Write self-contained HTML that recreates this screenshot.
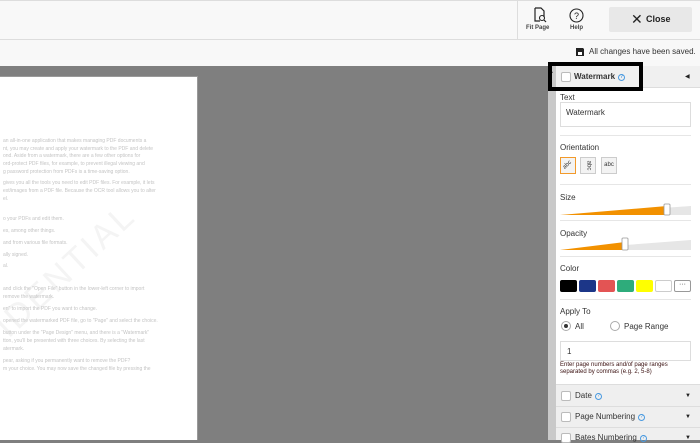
<!DOCTYPE html>
<html><head><meta charset="utf-8"><style>
*{margin:0;padding:0;box-sizing:border-box}
body{width:700px;height:440px;overflow:hidden;font-family:"Liberation Sans",Arial,sans-serif;background:#7f7f7f;position:relative;color:#333}
.a{position:absolute}
.top{left:0;top:0;width:700px;height:40px;background:#f8f8f8;border-top:1px solid #ddd;border-bottom:1px solid #ddd}
.bar2{left:0;top:40px;width:700px;height:26px;background:#f8f8f8}
.page{left:0;top:76px;width:198px;height:364px;background:#fff;border-right:1px solid #999;border-top:1px solid #999;overflow:hidden}
.tx{font-size:5px;color:#c4c4c4;white-space:nowrap;left:3px}
.sb{left:548px;top:66px;width:8px;height:374px;background:#c9c9c9}
.panel{left:556px;top:66px;width:144px;height:374px;background:#fff}
.lbl{font-size:8px;color:#333;left:560px}
.line{left:560px;width:131px;height:1px;background:#e6e6e6}
.cb{width:10px;height:10px;border:1px solid #bbb;background:#fff;border-radius:2px}
.q{display:inline-block;width:7px;height:7px;border:1px solid #4a9ae0;border-radius:50%;font-size:5px;color:#4a9ae0;text-align:center;line-height:5px;vertical-align:1px;margin-left:3px}
.row{left:556px;width:144px;background:#efefef;border-top:1px solid #ddd;font-size:8px}
.sw{top:280px;width:17px;height:12px;border-radius:2px}
.ar{left:685px;font-size:6px;line-height:6px;color:#222}
</style></head><body>
<div class="a top"></div>
<div class="a" style="left:517px;top:1px;width:1px;height:38px;background:#ddd"></div>
<svg class="a" style="left:532px;top:7px" width="16" height="16" viewBox="0 0 16 16"><path d="M3 1h6l3 3v6M3 1v13h5" fill="none" stroke="#222" stroke-width="1.2"/><circle cx="10" cy="11" r="2.5" fill="none" stroke="#222" stroke-width="1.1"/><path d="M12 13l2 2" stroke="#222" stroke-width="1.2"/></svg>
<div class="a" style="left:526px;top:25px;font-size:6px;font-weight:bold;color:#444">Fit Page</div>
<svg class="a" style="left:569px;top:8px" width="15" height="15" viewBox="0 0 15 15"><circle cx="7.5" cy="7.5" r="6.5" fill="none" stroke="#222" stroke-width="1.1"/><text x="7.5" y="11" font-size="9" text-anchor="middle" font-family="Liberation Sans" fill="#222">?</text></svg>
<div class="a" style="left:570px;top:25px;font-size:6px;font-weight:bold;color:#444">Help</div>
<div class="a" style="left:609px;top:7px;width:83px;height:25px;background:#e8e8e8;border-radius:2px"></div>
<div class="a" style="left:631px;top:11px;font-size:14px;color:#222">✕</div>
<div class="a" style="left:646px;top:14px;font-size:9px;font-weight:bold;color:#222">Close</div>
<div class="a bar2"></div>
<svg class="a" style="left:575px;top:47px" width="10" height="10" viewBox="0 0 10 10"><path d="M1 1h7l1 1v7H1z" fill="#222"/><rect x="3" y="5" width="4" height="3" fill="#fff"/></svg>
<div class="a" style="left:589px;top:47px;font-size:8px;color:#333">All changes have been saved.</div>
<div class="a page">
<div class="a" style="left:-12px;top:240px;font-size:34px;color:#f4f4f4;transform:rotate(-43deg);transform-origin:0 0;letter-spacing:3px;white-space:nowrap">IDENTIAL</div>
<div class="a tx" style="top:61px">an all-in-one application that makes managing PDF documents a</div>
<div class="a tx" style="top:69px">nt, you may create and apply your watermark to the PDF and delete</div>
<div class="a tx" style="top:76px">ond. Aside from a watermark, there are a few other options for</div>
<div class="a tx" style="top:84px">ord-protect PDF files, for example, to prevent illegal viewing and</div>
<div class="a tx" style="top:92px">g password protection from PDFs is a time-saving option.</div>
<div class="a tx" style="top:103px">gives you all the tools you need to edit PDF files. For example, it lets</div>
<div class="a tx" style="top:111px">ext/images from a PDF file. Because the OCR tool allows you to alter</div>
<div class="a tx" style="top:119px">el.</div>
<div class="a tx" style="top:139px">o your PDFs and edit them.</div>
<div class="a tx" style="top:151px">es, among other things.</div>
<div class="a tx" style="top:163px">and from various file formats.</div>
<div class="a tx" style="top:175px">ally signed.</div>
<div class="a tx" style="top:186px">al.</div>
<div class="a tx" style="top:209px">and click the "Open File" button in the lower-left corner to import</div>
<div class="a tx" style="top:217px">remove the watermark.</div>
<div class="a tx" style="top:229px">en" to import the PDF you want to change.</div>
<div class="a tx" style="top:241px">opened the watermarked PDF file, go to "Page" and select the choice.</div>
<div class="a tx" style="top:253px">button under the "Page Design" menu, and there is a "Watermark"</div>
<div class="a tx" style="top:261px">tton, you'll be presented with three choices. By selecting the last</div>
<div class="a tx" style="top:269px">atermark.</div>
<div class="a tx" style="top:281px">pear, asking if you permanently want to remove the PDF?</div>
<div class="a tx" style="top:289px">m your choice. You may now save the changed file by pressing the</div>
</div>
<div class="a sb"></div>
<div class="a" style="left:549px;top:69px;font-size:5px;color:#444">▲</div>
<div class="a panel"></div>
<div class="a" style="left:556px;top:66px;width:144px;height:22px;background:#f0f0f0;border-bottom:1px solid #ddd"></div>
<div class="a cb" style="left:561px;top:72px"></div>
<div class="a" style="left:574px;top:72px;font-size:8px;font-weight:bold;color:#333">Watermark<span class="q">?</span></div>
<div class="a ar" style="top:74px">◀</div>
<div class="a" style="left:548px;top:62px;width:95px;height:29px;border:4px solid #000"></div>
<div class="a lbl" style="top:93px">Text</div>
<div class="a" style="left:560px;top:102px;width:131px;height:25px;border:1px solid #ddd"></div>
<div class="a lbl" style="left:566px;top:108px">Watermark</div>
<div class="a line" style="top:135px"></div>
<div class="a lbl" style="top:143px">Orientation</div>
<div class="a" style="left:560px;top:157px;width:16px;height:17px;border:1px solid #f29a2b;background:#f3f3f3;font-size:6px;text-align:center;line-height:15px"><span style="display:inline-block;transform:rotate(-45deg)">abc</span></div>
<div class="a" style="left:580px;top:157px;width:16px;height:17px;border:1px solid #ccc;background:#f3f3f3;font-size:6px;text-align:center;line-height:15px"><span style="display:inline-block;transform:rotate(90deg)">abc</span></div>
<div class="a" style="left:601px;top:157px;width:16px;height:17px;border:1px solid #ccc;background:#f3f3f3;font-size:6px;text-align:center;line-height:15px">abc</div>
<div class="a line" style="top:184px"></div>
<div class="a lbl" style="top:193px">Size</div>
<svg class="a" style="left:560px;top:203px" width="131" height="13"><polygon points="0,12 131,3 131,12" fill="#e6e6e6"/><polygon points="0,12 107,3 107,12" fill="#f29100"/><rect x="104" y="1" width="6" height="11" rx="1" fill="#fff" stroke="#999" stroke-width="0.8"/></svg>
<div class="a line" style="top:220px"></div>
<div class="a lbl" style="top:229px">Opacity</div>
<svg class="a" style="left:560px;top:237px" width="131" height="14"><polygon points="0,13 131,3 131,13" fill="#e6e6e6"/><polygon points="0,13 65,5 65,13" fill="#f29100"/><rect x="62" y="1" width="6" height="12" rx="1" fill="#fff" stroke="#999" stroke-width="0.8"/></svg>
<div class="a line" style="top:256px"></div>
<div class="a lbl" style="top:264px">Color</div>
<div class="a sw" style="left:560px;background:#000"></div>
<div class="a sw" style="left:579px;background:#1c3688"></div>
<div class="a sw" style="left:598px;background:#e35454"></div>
<div class="a sw" style="left:617px;background:#2eac7b"></div>
<div class="a sw" style="left:636px;background:#ffff00"></div>
<div class="a sw" style="left:655px;background:#fff;border:1px solid #ccc"></div>
<div class="a sw" style="left:674px;background:#fff;border:1px solid #999;font-size:7px;text-align:center;line-height:7px">···</div>
<div class="a line" style="top:299px"></div>
<div class="a lbl" style="top:307px">Apply To</div>
<div class="a" style="left:561px;top:321px;width:10px;height:10px;border:1px solid #aaa;border-radius:50%"></div>
<div class="a" style="left:564px;top:324px;width:4px;height:4px;background:#333;border-radius:50%"></div>
<div class="a lbl" style="left:575px;top:322px">All</div>
<div class="a" style="left:610px;top:321px;width:10px;height:10px;border:1px solid #aaa;border-radius:50%"></div>
<div class="a lbl" style="left:624px;top:322px">Page Range</div>
<div class="a" style="left:560px;top:341px;width:131px;height:20px;border:1px solid #ddd"></div>
<div class="a lbl" style="left:567px;top:347px">1</div>
<div class="a" style="left:560px;top:362px;font-size:6px;line-height:7px;color:#3a1010">Enter page numbers and/of page ranges<br>separated by commas (e.g. 2, 5-8)</div>
<div class="a row" style="top:384px;height:24px"></div>
<div class="a cb" style="left:561px;top:391px"></div>
<div class="a" style="left:575px;top:391px;font-size:8px">Date<span class="q">?</span></div>
<div class="a ar" style="top:393px">▼</div>
<div class="a row" style="top:406px;height:22px"></div>
<div class="a cb" style="left:561px;top:412px"></div>
<div class="a" style="left:575px;top:412px;font-size:8px">Page Numbering<span class="q">?</span></div>
<div class="a ar" style="top:414px">▼</div>
<div class="a row" style="top:427px;height:13px"></div>
<div class="a cb" style="left:561px;top:433px"></div>
<div class="a" style="left:575px;top:433px;font-size:8px">Bates Numbering<span class="q">?</span></div>
<div class="a ar" style="top:435px">▼</div>
</body></html>
